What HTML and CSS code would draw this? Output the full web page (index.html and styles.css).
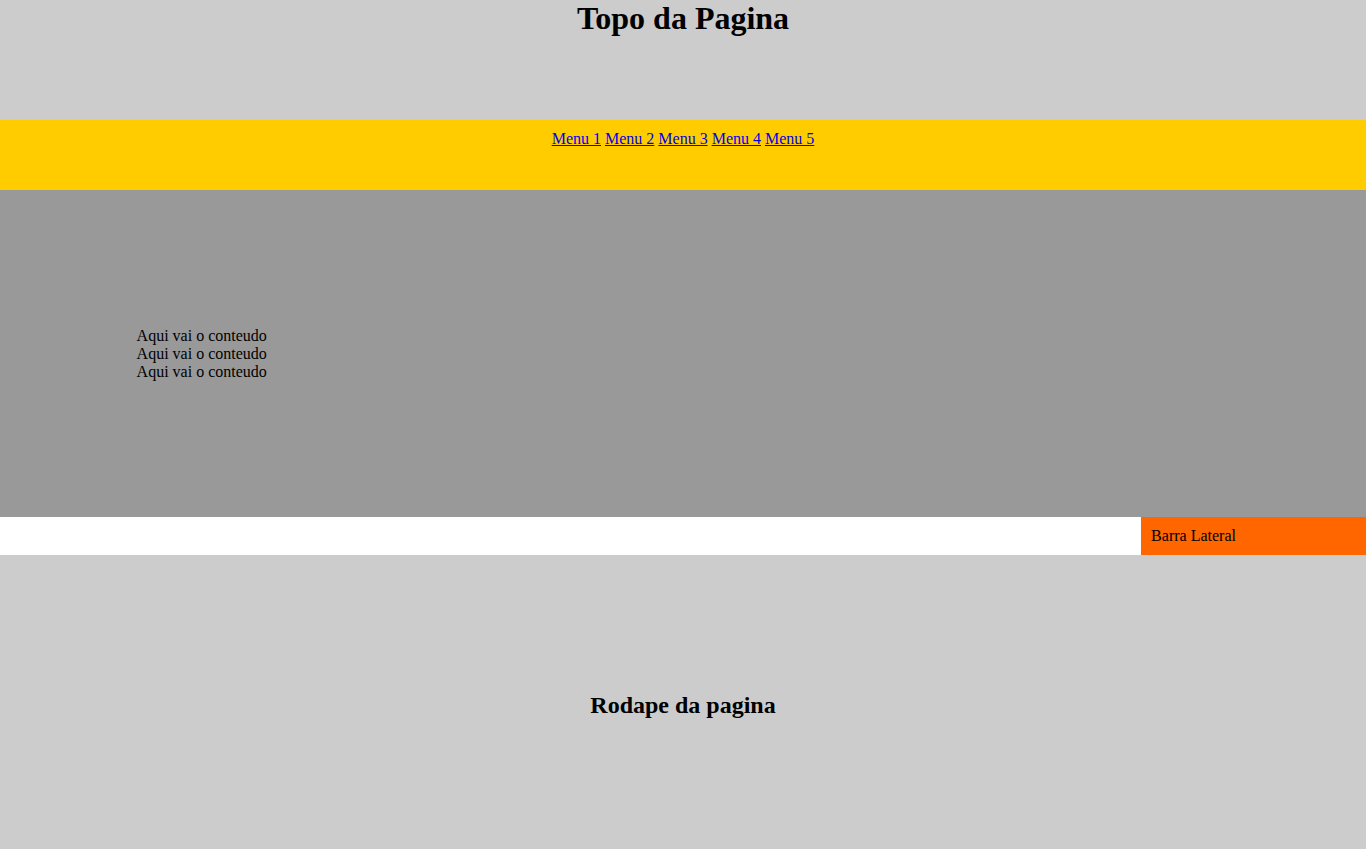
FILE: index.html
```html
<!DOCTYPE html>
<html lang="pt">
<head>
<meta charset="utf-8">
<title>Layout</title>
<link rel="stylesheet" href="styles.css">
</head>
<body>
<header class="topo">
  <h1 class="topo-titulo">Topo da Pagina</h1>
</header>
<nav class="menu">
  <a href="#">Menu 1</a>
  <a href="#">Menu 2</a>
  <a href="#">Menu 3</a>
  <a href="#">Menu 4</a>
  <a href="#">Menu 5</a>
</nav>
<main class="conteudo">
  Aqui vai o conteudo<br>
  Aqui vai o conteudo<br>
  Aqui vai o conteudo
</main>
<div class="linha-lateral">
  <aside class="lateral">Barra Lateral</aside>
</div>
<footer class="rodape">
  <h2 class="rodape-titulo">Rodape da pagina</h2>
</footer>
</body>
</html>
```
FILE: styles.css
```css
html, body {
  margin: 0;
  padding: 0;
}
body {
  font-family: "Liberation Serif", "Times New Roman", serif;
  font-size: 16px;
  color: #000;
  background: #fff;
}
.topo {
  background: #ccc;
  height: 120px;
  text-align: center;
}
.topo-titulo {
  margin: 0;
  font-size: 32px;
}
.menu {
  background: #fc0;
  height: 50px;
  padding: 10px 0;
  text-align: center;
}
.menu a {
  color: #00e;
}
.conteudo {
  display: block;
  background: #999;
  padding: 10%;
}
.linha-lateral {
  display: flex;
  justify-content: flex-end;
}
.lateral {
  background: #f60;
  width: 15%;
  padding: 10px;
}
.rodape {
  background: #ccc;
  padding: 10%;
  text-align: center;
}
.rodape-titulo {
  margin: 0;
  font-size: 24px;
}
```
